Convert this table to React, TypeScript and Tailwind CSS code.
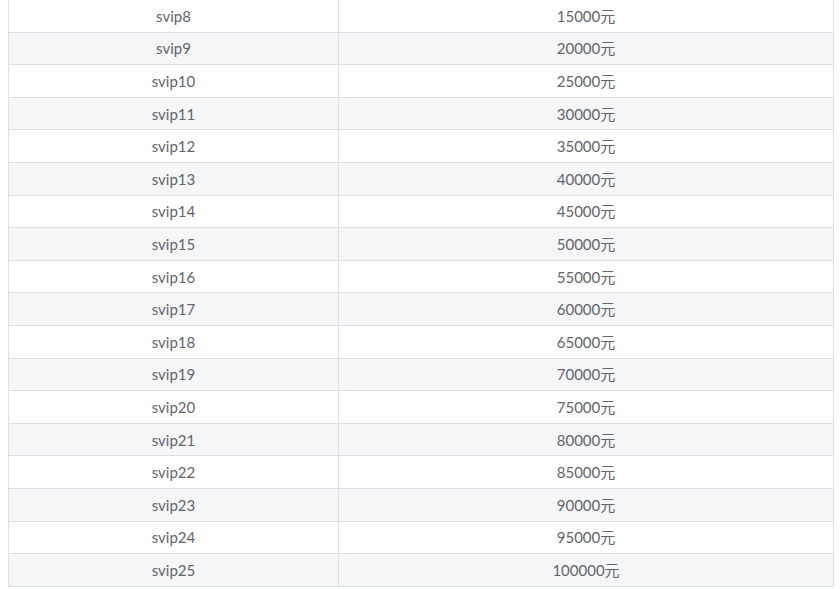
const ROWS = Array.from({ length: 18 }, (_, i) => ({
  level: `svip${i + 8}`,
  amount: `${(i + 3) * 5000}元`,
}));

export default function App() {
  return (
    <div className="h-[589px] overflow-hidden bg-white pl-2 pr-[6px] font-['Lato','Noto_Sans_CJK_SC',sans-serif] text-[15px] text-[#62656b]">
      <table className="-mt-[1px] w-full border-collapse border border-[#dcdfe6]">
        <tbody>
          {ROWS.map((r, i) => (
            <tr key={r.level} className={i % 2 === 1 ? "bg-[#f5f6f8]" : "bg-white"}>
              <td className="h-[32.6px] w-[330px] border border-[#dcdfe6] p-0 pt-px text-center leading-none">{r.level}</td>
              <td className="h-[32.6px] border border-[#dcdfe6] p-0 pt-px text-center leading-none">{r.amount}</td>
            </tr>
          ))}
        </tbody>
      </table>
    </div>
  );
}
